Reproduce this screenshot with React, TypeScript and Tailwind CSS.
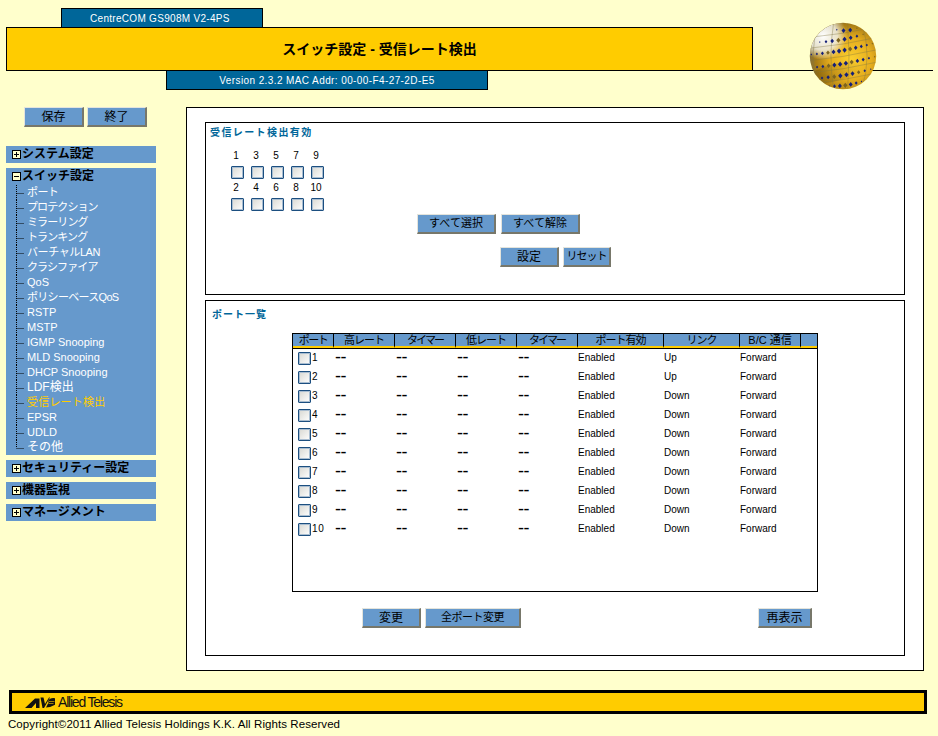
import type { ReactNode } from "react";

const menuItems = [
  { t: "ポート", c: "text-[11px] tracking-[-0.6px]" },
  { t: "プロテクション", c: "text-[11px] tracking-[-0.9px]" },
  { t: "ミラーリング", c: "text-[11px] tracking-[-0.9px]" },
  { t: "トランキング", c: "text-[11px] tracking-[-0.9px]" },
  { t: "バーチャルLAN", c: "text-[11px] tracking-[-0.4px]" },
  { t: "クラシファイア", c: "text-[11px] tracking-[-0.9px]" },
  { t: "QoS", c: "text-[11px]" },
  { t: "ポリシーベースQoS", c: "text-[11px] tracking-[-0.7px]" },
  { t: "RSTP", c: "text-[11px]" },
  { t: "MSTP", c: "text-[11px]" },
  { t: "IGMP Snooping", c: "text-[11px]" },
  { t: "MLD Snooping", c: "text-[11px]" },
  { t: "DHCP Snooping", c: "text-[11px]" },
  { t: "LDF検出", c: "text-[12px]" },
  { t: "受信レート検出", c: "text-[11px] tracking-[0.2px] text-[#ffcc00]" },
  { t: "EPSR", c: "text-[11px]" },
  { t: "UDLD", c: "text-[11px]" },
  { t: "その他", c: "text-[12px]" },
];

const ports = [
  { id: 1, link: "Up" },
  { id: 2, link: "Up" },
  { id: 3, link: "Down" },
  { id: 4, link: "Down" },
  { id: 5, link: "Down" },
  { id: 6, link: "Down" },
  { id: 7, link: "Down" },
  { id: 8, link: "Down" },
  { id: 9, link: "Down" },
  { id: 10, link: "Down" },
];

const Btn = ({ w, children }: { w: string; children: ReactNode }) => (
  <button
    className={`${w} h-[20px] bg-[#6699cc] border border-t-[#e4e4dc] border-l-[#e4e4dc] border-r-[#77776a] border-b-[#77776a] border-r-2 border-b-2 leading-none whitespace-nowrap text-black`}
  >
    {children}
  </button>
);

const Check = () => (
  <span className="block w-[13px] h-[13px] border border-[#1c4f80] rounded-[1px] shadow-[inset_0_0_0_1px_#a9bdd0] bg-gradient-to-br from-[#d8d8d2] to-[#ffffff]" />
);

const TreeBox = ({ open }: { open: boolean }) => (
  <svg width="9" height="9" viewBox="0 0 9 9" className="shrink-0">
    <rect x="0.5" y="0.5" width="8" height="8" fill="#ffffcc" stroke="#000" />
    <path d={open ? "M2 4.5h5" : "M2 4.5h5M4.5 2v5"} stroke="#000" />
  </svg>
);

const Branch = ({ last }: { last: boolean }) => (
  <svg width="21" height="15" viewBox="0 0 21 15" className="shrink-0">
    <path
      d={last ? "M10.5 0v8M10.5 8.5h8" : "M10.5 0v15M10.5 8.5h8"}
      stroke="#000"
      strokeDasharray="1 1"
      fill="none"
    />
  </svg>
);

const MenuHead = ({ open, label }: { open?: boolean; label: string }) => (
  <div className="h-[17px] flex items-center pl-[6px] text-[12px] font-bold leading-none text-black">
    <TreeBox open={!!open} />
    <span className="ml-px -mt-px">{label}</span>
  </div>
);

const Globe = () => {
  const rows = [
    { y: 9, x0: 36, x1: 62, b: -1 },
    { y: 21, x0: 14, x1: 70, b: -5 },
    { y: 35, x0: 3, x1: 82, b: -7 },
    { y: 52, x0: 3, x1: 85, b: -7 },
    { y: 67, x0: 9, x1: 80, b: -6 },
    { y: 80, x0: 26, x1: 68, b: -3 },
  ];
  return (
    <svg width="68" height="68" viewBox="0 0 88 88" className="absolute left-[809px] top-[22px]">
      <defs>
        <radialGradient id="gold" cx="0.62" cy="0.55" r="0.62">
          <stop offset="0" stopColor="#fbd030" />
          <stop offset="0.5" stopColor="#e6ae1e" />
          <stop offset="0.85" stopColor="#a87c14" />
          <stop offset="1" stopColor="#85703a" />
        </radialGradient>
        <radialGradient id="shine" cx="0.2" cy="0.2" r="0.36">
          <stop offset="0" stopColor="#ffffff" />
          <stop offset="0.6" stopColor="#f0f0e6" stopOpacity="0.85" />
          <stop offset="1" stopColor="#eeeee2" stopOpacity="0" />
        </radialGradient>
        <linearGradient id="band" x1="0" y1="0" x2="1" y2="0">
          <stop offset="0" stopColor="#7c5c0c" stopOpacity="0.55" />
          <stop offset="1" stopColor="#7c5c0c" stopOpacity="0" />
        </linearGradient>
        <clipPath id="ball">
          <circle cx="44" cy="44" r="43" />
        </clipPath>
      </defs>
      <circle cx="44" cy="44" r="43" fill="url(#gold)" />
      <g clipPath="url(#ball)">
        <ellipse cx="32" cy="66" rx="36" ry="11" fill="url(#band)" transform="rotate(-14 32 66)" />
        <circle cx="44" cy="44" r="43" fill="url(#shine)" />
        {[-30, -12, 6, 24].map((o) => (
          <path key={o} d={`M${44 + o} 0Q${44 + o * 1.6} 44 ${44 + o} 88`} stroke="#7f7440" strokeOpacity="0.5" fill="none" />
        ))}
        {[14, 28, 44, 60, 74].map((y) => (
          <path key={y} d={`M0 ${y + 6}Q44 ${y + 2} 88 ${y - 8}`} stroke="#7f7440" strokeOpacity="0.5" fill="none" />
        ))}
        {rows.map((r) => {
          const n = Math.round((r.x1 - r.x0) / 7.5);
          return Array.from({ length: n + 1 }, (_, i) => {
            const t = i / n;
            const x = r.x0 + (r.x1 - r.x0) * t;
            const y = r.y + r.b * (t - 0.5) * 2 + 2 * Math.sin(t * Math.PI);
            const s = 1 + 1.8 * Math.sin(t * Math.PI);
            return (
              <path
                key={`${r.y}-${i}`}
                d={`M${x - s} ${y}L${x} ${y - s * 1.2}L${x + s} ${y}L${x} ${y + s * 1.2}Z`}
                fill={i % 4 === 3 ? "#7d6420" : "#14207a"}
              />
            );
          });
        })}
      </g>
    </svg>
  );
};

const LogoMark = () => (
  <svg width="30" height="11" viewBox="0 0 30 11" className="shrink-0">
    <path d="M0 11L10 1.5h4.5V11H11V6L6.5 11Z" fill="#111" />
    <path d="M15.5 0.5h3l1.5 6.5L24 0.5h1L19 11h-1.5Z" fill="#111" />
    <path d="M23.5 5.5a4.5 3.6 0 1 1 6 2.5Q25 10.5 21 10.5Z" fill="#111" />
    <path d="M24 4.5h5.5M23.5 6.5h5" stroke="#ffcc00" strokeWidth="0.6" />
  </svg>
);

const headers = [
  { w: "w-[41px]", t: "ポート", c: "tracking-[-1.5px]" },
  { w: "w-[61px]", t: "高レート", c: "tracking-[-1px]" },
  { w: "w-[61px]", t: "タイマー", c: "tracking-[-2px]" },
  { w: "w-[61px]", t: "低レート", c: "tracking-[-1px]" },
  { w: "w-[61px]", t: "タイマー", c: "tracking-[-2px]" },
  { w: "w-[86px]", t: "ポート有効", c: "tracking-[-1px]" },
  { w: "w-[76px]", t: "リンク", c: "tracking-[-1px]" },
  { w: "w-[61px]", t: "B/C 通信", c: "" },
  { w: "flex-1", t: "", c: "" },
];

const Dash = () => <span className="text-[18px] tracking-[-0.5px] leading-none">--</span>;

export default function App() {
  return (
    <div className="relative w-[938px] h-[736px] overflow-hidden bg-[#ffffcc] font-[family-name:'Liberation_Sans','Noto_Sans_CJK_JP',sans-serif] text-black">
      {/* header */}
      <div className="pt-[8px]">
        <div className="ml-[61px] w-[202px] h-[19px] bg-[#006699] border-x border-t border-black flex items-center pl-[28px] text-[10px] tracking-[0.3px] text-white">
          CentreCOM GS908M V2-4PS
        </div>
        <div className="flex">
          <div className="ml-[6px] w-[747px] h-[44px] bg-[#ffcc00] border border-black flex items-center justify-center text-[14px] font-bold">
            スイッチ設定 - 受信レート検出
          </div>
          <div className="w-[180px] h-[44px] border-b border-black" />
        </div>
        <div className="ml-[166px] w-[322px] h-[19px] bg-[#006699] border-x border-b border-black flex items-center justify-center text-[10px] tracking-[0.4px] text-white">
          Version 2.3.2 MAC Addr: 00-00-F4-27-2D-E5
        </div>
      </div>
      <Globe />

      {/* body */}
      <div className="flex mt-[17px]">
        <div className="ml-[6px] w-[150px] shrink-0">
          <div className="flex gap-[3px] pl-[18px] text-[12px]">
            <Btn w="w-[60px]">保存</Btn>
            <Btn w="w-[60px]">終了</Btn>
          </div>
          <div className="mt-[19px] flex flex-col gap-[5px]">
            <div className="bg-[#6699cc]">
              <MenuHead label="システム設定" />
            </div>
            <div className="bg-[#6699cc]">
              <MenuHead open label="スイッチ設定" />
              {menuItems.map((m, i) => (
                <div key={m.t} className="h-[15px] flex items-center">
                  <Branch last={i === menuItems.length - 1} />
                  <span className={`${m.c.includes("ffcc00") ? "" : "text-white"} ${m.c} -mt-px leading-none whitespace-nowrap`}>
                    {m.t}
                  </span>
                </div>
              ))}
            </div>
            <div className="bg-[#6699cc]">
              <MenuHead label="セキュリティー設定" />
            </div>
            <div className="bg-[#6699cc]">
              <MenuHead label="機器監視" />
            </div>
            <div className="bg-[#6699cc]">
              <MenuHead label="マネージメント" />
            </div>
          </div>
        </div>

        <div className="ml-[30px] w-[738px] h-[564px] bg-white border border-black pl-[18px] pt-[14px] flex flex-col gap-[5px]">
          {/* enable box */}
          <div className="w-[700px] h-[173px] border border-black pl-[4px] pt-[3px]">
            <div className="text-[10px] font-bold tracking-[1.4px] leading-[14px] text-[#006699]">
              受信レート検出有効
            </div>
            <div className="ml-[17px] mt-[8px] grid grid-cols-[repeat(5,20px)] grid-rows-[16px_16px_16px_16px] text-[10px] leading-none">
              {[1, 3, 5, 7, 9].map((n) => (
                <span key={n} className="pr-[2px] pt-[3px] text-center">{n}</span>
              ))}
              {[1, 3, 5, 7, 9].map((n) => (
                <span key={n} className="pl-[4px] pt-[2px]"><Check /></span>
              ))}
              {[2, 4, 6, 8, 10].map((n) => (
                <span key={n} className="pr-[2px] pt-[3px] text-center">{n}</span>
              ))}
              {[2, 4, 6, 8, 10].map((n) => (
                <span key={n} className="pl-[4px] pt-[2px]"><Check /></span>
              ))}
            </div>
            <div className="ml-[207px] mt-[2px] flex gap-[5px] text-[11px]">
              <Btn w="w-[79px]">すべて選択</Btn>
              <Btn w="w-[79px]">すべて解除</Btn>
            </div>
            <div className="ml-[290px] mt-[13px] flex gap-[4px] text-[12px]">
              <Btn w="w-[59px]">設定</Btn>
              <Btn w="w-[48px] text-[11px] tracking-[-1px]">リセット</Btn>
            </div>
          </div>

          {/* port list */}
          <div className="w-[700px] h-[356px] border border-black pl-[6px] pt-[7px]">
            <div className="text-[10px] font-bold tracking-[1px] leading-[14px] text-[#006699]">
              ポート一覧
            </div>
            <div className="ml-[80px] mt-[11px] w-[526px] h-[259px] border border-black flex flex-col">
              <div className="flex h-[14px] shrink-0">
                {headers.map((h, i) => (
                  <div
                    key={i}
                    className={`${h.w} ${h.c} h-[14px] bg-[#6699cc] border-r border-b-2 border-r-black border-b-[#ffcc00] last:border-r-0 text-center text-[11px] leading-[12px] whitespace-nowrap`}
                  >
                    {h.t}
                  </div>
                ))}
              </div>
              <div className="h-px bg-black" />
              <div>
                {ports.map((p) => (
                  <div key={p.id} className="flex h-[19px] items-center text-[10px]">
                    <div className="w-[41px] pl-[5px] flex items-center gap-px">
                      <Check />
                      <span className="-mt-[3px] tracking-[0.6px]">{p.id}</span>
                    </div>
                    <div className="w-[61px] pl-px -mt-[3px]"><Dash /></div>
                    <div className="w-[61px] pl-px -mt-[3px]"><Dash /></div>
                    <div className="w-[61px] pl-px -mt-[3px]"><Dash /></div>
                    <div className="w-[61px] pl-px -mt-[3px]"><Dash /></div>
                    <div className="w-[86px] -mt-[3px]">Enabled</div>
                    <div className="w-[76px] -mt-[3px]">{p.link}</div>
                    <div className="w-[61px] -mt-[3px]">Forward</div>
                  </div>
                ))}
              </div>
            </div>
            <div className="mt-[16px] flex">
              <div className="ml-[150px] flex gap-[4px]">
                <Btn w="w-[59px] text-[12px]">変更</Btn>
                <Btn w="w-[96px] text-[11px] tracking-[-0.5px]">全ポート変更</Btn>
              </div>
              <div className="ml-[237px] flex">
                <Btn w="w-[54px] text-[12px]">再表示</Btn>
              </div>
            </div>
          </div>
        </div>
      </div>

      {/* footer */}
      <div className="ml-[9px] mt-[19px] w-[918px] h-[24px] bg-[#ffcc00] border-[3px] border-black flex items-center pl-[13px]">
        <LogoMark />
        <span className="ml-[3px] text-[14px] tracking-[-1.2px] leading-none text-[#111]">Allied Telesis</span>
      </div>
      <div className="ml-[8px] mt-[3px] text-[11.5px] tracking-[0.07px] leading-[14px]">
        Copyright©2011 Allied Telesis Holdings K.K. All Rights Reserved
      </div>
    </div>
  );
}
